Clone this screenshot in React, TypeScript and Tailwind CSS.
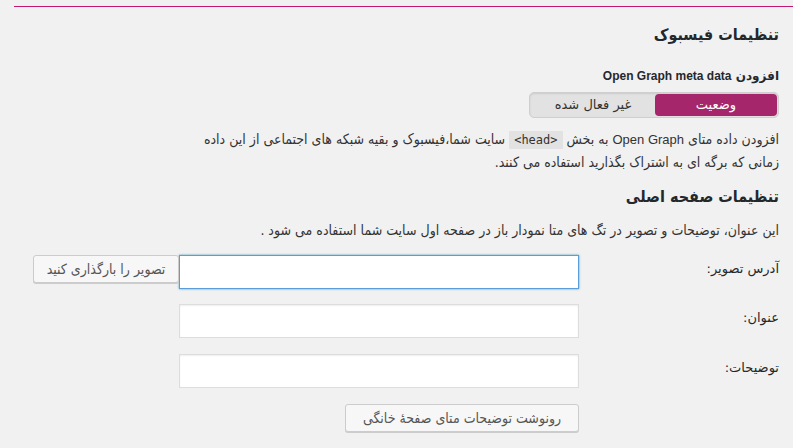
import React from "react";

const font = { fontFamily: '"DejaVu Sans", "Liberation Sans", sans-serif' };
const cond = { fontFamily: '"DejaVu Sans Condensed", "DejaVu Sans", sans-serif' };

function Row({ label, children, mt }: { label: string; children: React.ReactNode; mt: string }) {
  return (
    <div className={`flex items-start ${mt}`}>
      <div className="w-[200px] shrink-0 pt-[4px] text-[13px] text-[#23282d]">{label}</div>
      <div className="flex items-start">{children}</div>
    </div>
  );
}

export default function App() {
  return (
    <div dir="rtl" style={font} className="w-[793px] h-[448px] overflow-hidden bg-[#f1f1f1] text-[#444]">
      <div className="pt-[6px] pl-[14px]">
        <div className="h-px bg-[#c2186f]" />
      </div>
      <div className="pr-[14px]">
        <h2 style={cond} className="mt-[16px] text-[16px] font-bold leading-[24px] text-[#23282d]">تنظیمات فیسبوک</h2>
        <div className="mt-[20px] text-[12px] font-bold leading-[18px] text-[#23282d]">
          افزودن <span style={{ fontFamily: '"Liberation Sans", sans-serif' }} className="text-[12px]">Open Graph meta data</span>
        </div>
        <div className="mt-[7px] flex">
          <div className="flex h-[26px] w-[250px] rounded-[5px] border border-[#cfcfcf] bg-[#e2e2e2] p-px shadow-[inset_0_1px_2px_rgba(0,0,0,0.1)]">
            <div className="flex w-[122px] items-center justify-center rounded-[4px] bg-[#a5266a] text-[13px] text-white">وضعیت</div>
            <div className="flex flex-1 items-center justify-center text-[13px] text-[#333]">غیر فعال شده</div>
          </div>
        </div>
        <p style={cond} className="mt-[10px] text-[14px] leading-[22px] text-[#333]">
          افزودن داده متای <span style={{ fontFamily: '"Liberation Sans", sans-serif' }} className="text-[13px]">Open Graph</span> به بخش{" "}
          <code style={{ fontFamily: '"DejaVu Sans Mono", monospace' }} className="bg-[#e2e2e2] px-[5px] py-[2px] text-[12px]">&lt;head&gt;</code>{" "}
          سایت شما،فیسبوک و بقیه شبکه های اجتماعی از این داده
          <br />
          زمانی که برگه ای به اشتراک بگذارید استفاده می کنند.
        </p>
        <h2 style={cond} className="mt-[12px] text-[16px] font-bold leading-[24px] text-[#23282d]">تنظیمات صفحه اصلی</h2>
        <p style={cond} className="mt-[11px] text-[14px] leading-[20px] text-[#333]">
          این عنوان، توضیحات و تصویر در تگ های متا نمودار باز در صفحه اول سایت شما استفاده می شود .
        </p>
        <Row label="آدرس تصویر:" mt="mt-[15px]">
          <input className="h-[34px] w-[400px] border border-[#5b9dd9] bg-white shadow-[0_0_2px_rgba(30,140,190,0.8)] outline-none" />
          <button style={cond} className="h-[28px] w-[146px] rounded-[3px] border border-[#ccc] bg-[#f7f7f7] text-[14px] text-[#555] shadow-[0_1px_0_#ccc]">
            تصویر را بارگذاری کنید
          </button>
        </Row>
        <Row label="عنوان:" mt="mt-[15px]">
          <input className="h-[34px] w-[400px] border border-[#ddd] bg-white shadow-[inset_0_1px_2px_rgba(0,0,0,0.07)] outline-none" />
        </Row>
        <Row label="توضیحات:" mt="mt-[16px]">
          <input className="h-[34px] w-[400px] border border-[#ddd] bg-white shadow-[inset_0_1px_2px_rgba(0,0,0,0.07)] outline-none" />
        </Row>
        <div className="mt-[16px] flex pr-[200px]">
          <button style={cond} className="h-[28px] w-[234px] rounded-[3px] border border-[#ccc] bg-[#f7f7f7] text-[14px] text-[#555] shadow-[0_1px_0_#ccc]">
            رونوشت توضیحات متای صفحهٔ خانگی
          </button>
        </div>
      </div>
    </div>
  );
}
